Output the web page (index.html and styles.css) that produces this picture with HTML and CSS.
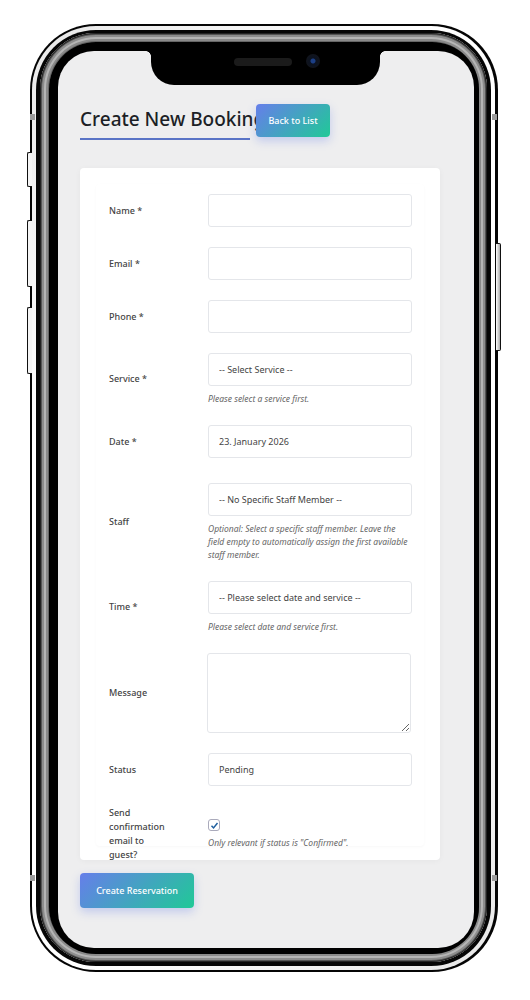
FILE: index.html
```html
<!DOCTYPE html>
<html lang="en">
<head>
<meta charset="utf-8">
<title>Create New Booking</title>
<link rel="stylesheet" href="styles.css">
</head>
<body>
<div class="stage">
  <div class="phone">
    <span class="key key-l1"></span>
    <span class="key key-l2"></span>
    <span class="key key-l3"></span>
    <span class="key key-r1"></span>
    <span class="band band-lt"></span>
    <span class="band band-rt"></span>
    <span class="band band-lb"></span>
    <span class="band band-rb"></span>
    <div class="shell-white">
      <div class="shell-dark">
        <div class="shell-rim">
          <div class="bezel">
            <main class="screen">
              <div class="notch">
                <span class="speaker"></span>
                <span class="camera"></span>
              </div>
              <header class="head">
                <h1 class="title">Create New Booking</h1>
                <a class="btn btn-back">Back to List</a>
              </header>
              <form class="card">
                <div class="table">
                  <div class="row"><label class="lbl">Name *</label><div class="fld"><input class="ctl" type="text"></div></div>
                  <div class="row"><label class="lbl">Email *</label><div class="fld"><input class="ctl" type="text"></div></div>
                  <div class="row"><label class="lbl">Phone *</label><div class="fld"><input class="ctl" type="text"></div></div>
                  <div class="row"><label class="lbl">Service *</label><div class="fld"><select class="ctl"><option>-- Select Service --</option></select><p class="help">Please select a service first.</p></div></div>
                  <div class="row"><label class="lbl">Date *</label><div class="fld"><input class="ctl" type="text" value="23. January 2026"></div></div>
                  <div class="row row-staff"><label class="lbl">Staff</label><div class="fld"><select class="ctl"><option>-- No Specific Staff Member --</option></select><p class="help">Optional: Select a specific staff member. Leave the field empty to automatically assign the first available staff member.</p></div></div>
                  <div class="row"><label class="lbl">Time *</label><div class="fld"><select class="ctl"><option>-- Please select date and service --</option></select><p class="help">Please select date and service first.</p></div></div>
                  <div class="row"><label class="lbl">Message</label><div class="fld"><textarea class="area"></textarea></div></div>
                  <div class="row"><label class="lbl">Status</label><div class="fld"><select class="ctl"><option>Pending</option></select></div></div>
                  <div class="row row-check"><label class="lbl">Send confirmation email to guest?</label><div class="fld">
                    <span class="check"><svg viewBox="0 0 12 12" width="9" height="9"><path d="M2 6.4 4.7 9.2 10 2.8" fill="none" stroke="#1f5f9e" stroke-width="2"/></svg></span>
                    <p class="help help-check">Only relevant if status is "Confirmed".</p></div></div>
                </div>
              </form>
              <button class="btn btn-submit" type="button">Create Reservation</button>
            </main>
          </div>
        </div>
      </div>
    </div>
  </div>
</div>
</body>
</html>
```
FILE: styles.css
```css
* { box-sizing: border-box; }
html, body { margin: 0; background: #fff; }
body { width: 530px; height: 1000px; overflow: hidden; font-family: "Noto Sans", "Open Sans", sans-serif; }
.stage { padding: 24px 0 0 30px; }

.phone { position: relative; width: 468px; height: 948px; background: #050505; border-radius: 66px; padding: 2px 3px 2px 2px; }
.shell-white { height: 100%; background: linear-gradient(135deg, #e8e8e8, #fff 30%, #fff 70%, #e8e8e8); border-radius: 64px; padding: 4px; }
.shell-dark { height: 100%; background: #060606; border-radius: 60px; padding: 3px 4px 4px 4px; }
.shell-rim { height: 100%; border-radius: 56px; background: #888; padding: 9px 8px 8px 9px;
  box-shadow: inset 0 0 0 1px #222, inset 0 0 0 2px #555, inset 0 0 0 4px #8d8d8d, inset 0 0 0 6px #b5b5b5, inset 0 0 0 8px #8a8a8a, inset 0 0 0 9px #666; }
.bezel { height: 100%; background: #000; border-radius: 47px; padding: 9px 5px 6px 9px; }
.screen { position: relative; height: 100%; background: #eeeeef; border-radius: 36px; overflow: hidden; padding: 53px 0 0 22px; }

.key { position: absolute; width: 5px; background: #f4f4f4; border: 1px solid #111; border-radius: 2px 0 0 2px; border-right: 0; }
.key-l1 { left: -3px; top: 128px; height: 35px; }
.key-l2 { left: -3px; top: 196px; height: 67px; }
.key-l3 { left: -3px; top: 283px; height: 67px; }
.key-r1 { left: 466px; top: 219px; height: 108px; border-radius: 0 2px 2px 0; border: 1px solid #111; border-left: 0; background: linear-gradient(90deg, #fff, #aaa); width: 5px; }
.band { position: absolute; width: 5px; height: 6px; background: #9a9a9a; z-index: 2; }
.band-lt { left: 0; top: 90px; }
.band-rt { left: 462px; top: 90px; }
.band-lb { left: 0; top: 851px; }
.band-rb { left: 462px; top: 851px; }

.notch { position: absolute; left: 93px; top: 0; width: 229px; height: 34px; background: #000; border-radius: 0 0 23px 23px; display: flex; align-items: flex-start; }
.notch::before, .notch::after { content: ""; position: absolute; top: 0; width: 5px; height: 5px; }
.notch::before { left: -5px; background: radial-gradient(circle at 0 100%, transparent 4.5px, #000 5px); }
.notch::after { right: -5px; background: radial-gradient(circle at 100% 100%, transparent 4.5px, #000 5px); }
.speaker { position: absolute; left: 83px; top: 7px; width: 58px; height: 8px; border-radius: 4px; background: #1b1b1b; }
.camera { position: absolute; left: 155px; top: 3px; width: 14px; height: 14px; border-radius: 50%; background: radial-gradient(circle, #1c3f86 0 2px, #0b1220 3px, #11141c 7px); }

.head { display: flex; align-items: flex-start; gap: 6px; }
.title { margin: 0; width: 170px; height: 36px; border-bottom: 2px solid #5a74c6; font-size: 19px; line-height: 31px; font-weight: 500; color: #1c1f26; white-space: nowrap; }
.btn { display: flex; align-items: center; justify-content: center; border: 0; border-radius: 4px; color: #fff; font-family: inherit; font-weight: 500; font-size: 9px; background: linear-gradient(135deg, #667eea, #20c997); box-shadow: 0 4px 10px rgba(102, 126, 234, .32); }
.btn-back { width: 74px; height: 33px; }
.btn-submit { width: 114px; height: 35px; margin-top: 13px; }

.card { width: 360px; height: 692px; margin-top: 28px; background: #fff; border-radius: 4px; padding: 16px; box-shadow: 0 1px 6px rgba(0, 0, 0, .04); }
.table { height: 662px; padding-top: 0; border-radius: 4px; box-shadow: 0 1px 3px rgba(0, 0, 0, .03); }
.row { display: flex; align-items: center; padding: 10px 12px 10px 13px; }
.row-staff { margin-top: 5px; }
.lbl { flex: none; width: 99px; font-size: 9px; line-height: 14px; font-weight: 500; color: #444; padding-right: 40px; }
.fld { flex: 1; }
.ctl { display: block; width: 204px; height: 33px; padding: 0 10px; border: 1px solid #e4e6ea; border-radius: 3px; background: #fff; appearance: none; font-family: inherit; font-size: 9px; color: #444; outline: 0; }
.area { display: block; width: 204px; height: 80px; margin-left: -1px; border: 1px solid #e4e6ea; border-radius: 3px; background: #fff; outline: 0; resize: vertical; }
.help { margin: 6px 0 0; font-size: 8.5px; line-height: 13px; font-style: italic; color: #666; }
.check { display: flex; align-items: center; justify-content: center; width: 12px; height: 12px; border: 1px solid #aab; border-radius: 3px; background: #fff; }
.row-check { padding-top: 10px; }
.help-check { margin-top: 5px; }
```
